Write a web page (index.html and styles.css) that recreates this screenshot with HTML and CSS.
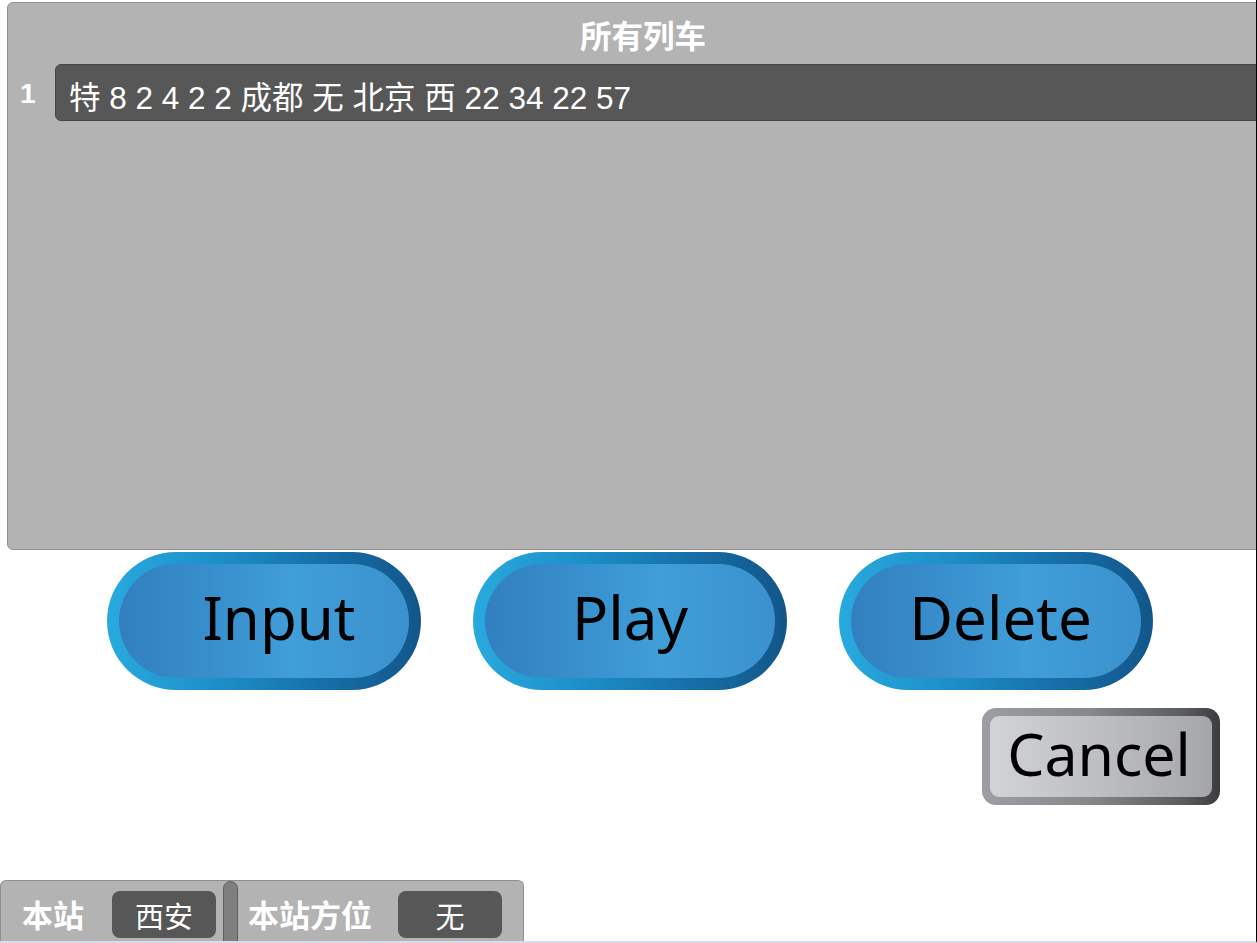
FILE: index.html
```html
<!DOCTYPE html>
<html>
<head>
  <meta charset="utf-8">
  <title>所有列车</title>
  <link rel="stylesheet" href="styles.css">
</head>
<body>
  <div class="screen">
    <section class="trains">
      <h1>所有列车</h1>
      <div class="row">
        <span class="num">1</span>
        <div class="item">特 8 2 4 2 2 成都 无 北京 西 22 34 22 57</div>
      </div>
    </section>

    <div class="actions">
      <button class="pill pill-input"><span>Input</span></button>
      <button class="pill"><span>Play</span></button>
      <button class="pill pill-delete"><span>Delete</span></button>
    </div>

    <div class="cancel-row">
      <button class="cancel"><span>Cancel</span></button>
    </div>

    <div class="status">
      <span class="label">本站</span>
      <span class="value">西安</span>
      <span class="divider"></span>
      <span class="label">本站方位</span>
      <span class="value">无</span>
    </div>
  </div>
</body>
</html>
```

FILE: styles.css
```css
body {
  margin: 0;
  background-color: #fff;
  font-family: "Liberation Sans", "Noto Sans CJK SC", sans-serif;
}
.screen {
  width: 1257px;
  height: 943px;
  box-sizing: border-box;
  border-right: 1px solid #000;
  border-bottom: 2px solid #d8dce6;
  overflow: hidden;
  display: flex;
  flex-direction: column;
}

/* train list */
.trains {
  flex: none;
  width: 1272px;
  height: 548px;
  margin: 2px 0 0 7px;
  box-sizing: border-box;
  padding-top: 10px;
  background: #b3b3b3;
  border: 1px solid #8f8f8f;
  border-radius: 6px;
}
.trains h1 {
  margin: 0;
  text-align: center;
  font-family: "Noto Sans CJK SC", sans-serif;
  font-weight: bold;
  font-size: 31.5px;
  line-height: 42px;
  color: #fff;
}
.row {
  display: flex;
  align-items: center;
  margin-top: 9px;
}
.row .num {
  width: 47px;
  box-sizing: border-box;
  padding: 3px 0 0 12px;
  font-weight: bold;
  font-size: 28px;
  color: #fff;
}
.row .item {
  flex: 1;
  height: 57px;
  box-sizing: border-box;
  padding: 5px 0 0 13px;
  display: flex;
  align-items: center;
  background: #575757;
  border: 1px solid #444;
  border-radius: 6px;
  color: #fff;
  font-size: 31.5px;
  white-space: nowrap;
}

/* big buttons */
.actions {
  display: flex;
  gap: 52px;
  padding-left: 107px;
  margin-top: 2px;
}
.pill {
  width: 314px;
  height: 138px;
  padding: 12px;
  border: none;
  border-radius: 69px;
  background: linear-gradient(to right, #28aadf 0%, #1d8fc8 35%, #176ea8 70%, #125689 100%);
  font-family: "Noto Sans", "Open Sans", sans-serif;
  font-size: 60px;
  color: #000;
  cursor: pointer;
}
.pill span {
  display: flex;
  align-items: center;
  justify-content: center;
  height: 100%;
  box-sizing: border-box;
  padding-bottom: 8px;
  border-radius: 57px;
  background: linear-gradient(to right, #327fbf 0%, #3a93d0 40%, #409ed8 60%, #3b91cd 100%);
}
.pill-input span {
  padding-left: 30px;
}
.pill-delete span {
  padding-left: 9px;
}

.cancel-row {
  display: flex;
  justify-content: flex-end;
  padding-right: 36px;
  margin-top: 18px;
}
.cancel {
  width: 238px;
  height: 97px;
  padding: 8px;
  border: none;
  border-radius: 14px;
  background: linear-gradient(to right, #9d9ea3 0%, #87888c 45%, #5a5b5e 85%, #3c3c3f 100%);
  font-family: "Noto Sans", "Open Sans", sans-serif;
  font-size: 59px;
  color: #000;
  cursor: pointer;
}
.cancel span {
  display: flex;
  align-items: center;
  justify-content: center;
  height: 100%;
  box-sizing: border-box;
  padding: 0 4px 7px 0;
  border-radius: 9px;
  background: linear-gradient(to right, #d2d3d7 0%, #bdbec2 50%, #a5a6aa 100%);
}

/* station bar */
.status {
  margin-top: auto;
  flex: none;
  width: 524px;
  height: 72px;
  box-sizing: border-box;
  padding-left: 21px;
  display: flex;
  align-items: flex-start;
  background: #b3b3b3;
  border: 1px solid #8f8f8f;
  border-bottom: none;
  border-radius: 6px 6px 0 0;
  transform: translateY(11px);
}
.status .label {
  height: 47px;
  margin-top: 10px;
  padding-bottom: 3px;
  box-sizing: border-box;
  display: flex;
  align-items: center;
  font-family: "Noto Sans CJK SC", sans-serif;
  font-weight: bold;
  font-size: 31px;
  color: #fff;
}
.status .value {
  width: 104px;
  height: 47px;
  margin: 10px 0 0 28px;
  display: flex;
  align-items: center;
  justify-content: center;
  background: #575757;
  border-radius: 8px;
  font-family: "Noto Sans CJK SC", sans-serif;
  font-size: 29px;
  color: #fff;
}
.status .value + .divider {
  margin-left: 7px;
}
.status .divider {
  width: 15px;
  height: 80px;
  box-sizing: border-box;
  margin-right: 10px;
  background: #7f7f7f;
  border: 1px solid #5e5e5e;
  border-radius: 8px 8px 0 0;
}
.status .divider + .label + .value {
  margin-left: 26px;
}
```
